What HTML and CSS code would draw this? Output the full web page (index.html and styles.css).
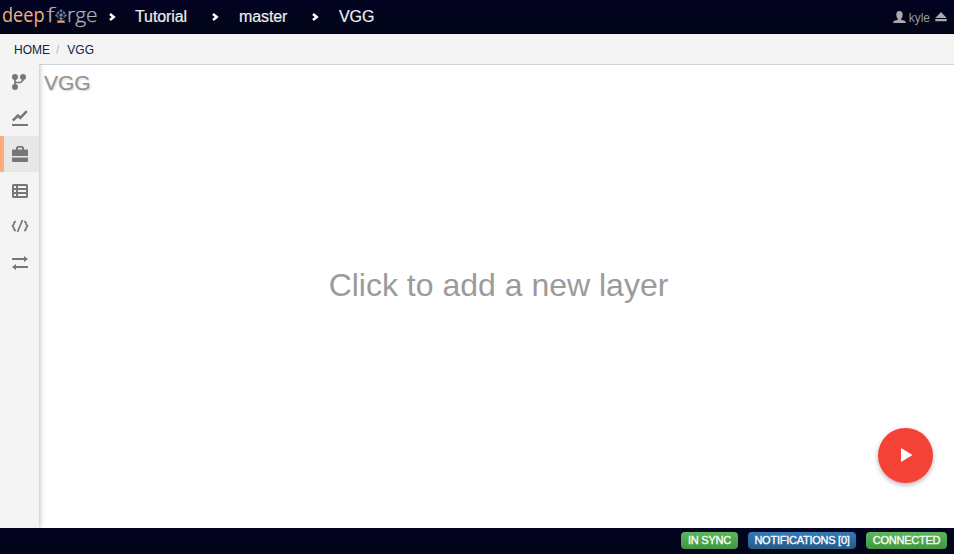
FILE: index.html
```html
<!DOCTYPE html>
<html lang="en">
<head>
<meta charset="utf-8">
<title>DeepForge</title>
<link rel="stylesheet" href="styles.css">
</head>
<body>
<header class="header">
  <svg class="logo" width="101" height="33" viewBox="0 0 101 33">
    <text class="logo-deep" x="2" y="22" textLength="42.500" lengthAdjust="spacingAndGlyphs">deep</text>
    <text class="logo-forge" x="46.500" y="22" textLength="8" lengthAdjust="spacingAndGlyphs">f</text>
    <g stroke="#60788e" stroke-width=".7" fill="none">
      <path d="M61 10l-4 3v4l4 3 4-3v-4zM57 13l8 4M65 13l-8 4M61 10v10"/>
      <g fill="#6f879c" stroke="none"><circle cx="61" cy="10.5" r="1.100"/><circle cx="58" cy="12.500" r="1"/><circle cx="64" cy="12.500" r="1"/><circle cx="56.3" cy="15.500" r="1.1"/><circle cx="65.7" cy="15.500" r="1.1"/><circle cx="61" cy="15" r="1.500"/><circle cx="61" cy="18.500" r="1.2"/></g>
    </g>
    <path d="M56.500 20.500h9l-1.500 1 1.500 1.200h-9l1.500-1.200z" fill="#e9ab78"/>
    <text class="logo-forge" x="67" y="22" textLength="30.500" lengthAdjust="spacingAndGlyphs">rge</text>
  </svg>
  <nav class="path">
    <svg class="chevron" width="8" height="10" viewBox="0 0 8 10"><path d="M1 2L4.700 5 1 8"/></svg>
    <span class="project">Tutorial</span>
    <svg class="chevron" width="8" height="10" viewBox="0 0 8 10"><path d="M1 2L4.700 5 1 8"/></svg>
    <span class="branch">master</span>
    <svg class="chevron" width="8" height="10" viewBox="0 0 8 10"><path d="M1 2L4.700 5 1 8"/></svg>
    <span class="node">VGG</span>
  </nav>
  <div class="user">
    <svg width="13" height="13" viewBox="0 0 13 13"><path d="M6.500 0C4.300 0 3.300 1.300 3.300 3.500c0 1.800.6 3.400 1.500 4.200v1L1.300 9.800Q.2 10.300.2 12h12.600q0-1.700-1.100-2.200L8.200 8.700v-1c.9-.8 1.500-2.400 1.500-4.200C9.700 1.300 8.700 0 6.500 0z"/></svg>
    <span class="user-name">kyle</span>
    <svg width="12" height="10" viewBox="0 0 12 10"><path d="M6 0L.3 6h11.400zM.3 7h11.400v2.300H.3z"/></svg>
  </div>
</header>
<div class="breadcrumb"><span>HOME</span><span class="slash">/</span><span>VGG</span></div>
<main class="main">
  <aside class="sidebar">
    <div class="item"><svg width="18" height="18" viewBox="0 0 18 18"><g fill="#777"><circle cx="4" cy="3.900" r="3"/><circle cx="12" cy="3.900" r="3"/><circle cx="4" cy="14" r="3"/></g><path d="M4 4v10M12 4v3.200L9.700 9.500H4" fill="none" stroke="#777" stroke-width="1.700"/></svg></div>
    <div class="item"><svg width="18" height="18" viewBox="0 0 18 18"><path d="M1.800 11.500L7 6.600l2.300 2.300 6.500-6.700" fill="none" stroke="#777" stroke-width="2.500"/><path d="M1 15h16v2H1z" fill="#777"/></svg></div>
    <div class="item active"><svg width="18" height="18" viewBox="0 0 18 18"><path fill="#777" fill-rule="evenodd" d="M5 4.500V2.500L6.500 1h5L13 2.500v2h3q1 0 1 1V11H1V5.500q0-1 1-1zM7 4.500h4V2.800H7zM1 12.500h16V16q0 1-1 1H2q-1 0-1-1z"/></svg></div>
    <div class="item low"><svg width="18" height="18" viewBox="0 0 18 18"><path fill="#777" fill-rule="evenodd" d="M2.500 2h13Q17 2 17 3.500v11q0 1.500-1.500 1.500h-13Q1 16 1 14.500v-11Q1 2 2.500 2zM3 4v2h2V4zm4 0v2h8V4zM3 8v2h2V8zm4 0v2h8V8zm-4 4v2h2v-2zm4 0v2h8v-2z"/></svg></div>
    <div class="item"><svg width="18" height="18" viewBox="0 0 18 18"><path fill="none" stroke="#777" stroke-width="1.700" d="M5 4.500Q2.800 4.500 3 7L1.500 9 3 11q-.2 2.500 2 2.500M13 4.500q2.200 0 2 2.500l1.500 2-1.500 2q.2 2.500-2 2.500M11.500 3l-5 12"/></svg></div>
    <div class="item low"><svg width="18" height="18" viewBox="0 0 18 18"><path fill="#777" d="M1 4h12V2l4 3-4 3V6H1zM17 12H5v-2l-4 3 4 3v-2h12z"/></svg></div>
  </aside>
  <section class="canvas">
    <div class="title">VGG</div>
    <div class="hint">Click to add a new layer</div>
    <div class="run"><svg width="12" height="14" viewBox="0 0 12 14"><path d="M0 0l11.500 7L0 14z" fill="#fff"/></svg></div>
  </section>
</main>
<footer class="footer">
  <span class="label sync">IN SYNC</span>
  <span class="label notifications">NOTIFICATIONS [0]</span>
  <span class="label connected">CONNECTED</span>
</footer>
</body>
</html>
```
FILE: styles.css
```css
* { box-sizing: border-box; }
body { margin: 0; height: 554px; display: flex; flex-direction: column; overflow: hidden; font-family: "Liberation Sans", Arial, sans-serif; background: #fff; }
.header { height: 34px; flex: none; display: flex; background: linear-gradient(#020222, #020618); border-bottom: 1px solid #000; color: #eee; }
.logo { flex: none; }
.logo text { font-family: "Open Sans", sans-serif; font-size: 20.500px; }
.logo-deep { fill: #efb27f; }
.logo-forge { fill: #b2b2b8; stroke: #b2b2b8; stroke-width: .25px; font-weight: 300; }
.path { display: flex; align-items: center; font-size: 16px; flex: 1; padding-left: 8px; white-space: nowrap; letter-spacing: -.1px; -webkit-text-stroke: .2px #eee; }
.chevron { flex: none; fill: none; stroke: #fff; stroke-width: 2.500; margin-top: 1px; }
.project { width: 77px; margin-left: 18px; }
.branch { width: 73px; margin-left: 19px; }
.node { margin-left: 19px; }
.user { display: flex; align-items: center; padding: 1px 7px 0 0; font-size: 12px; color: #999; fill: #aaa; }
.user-name { margin: 1px 5px 0 3px; }
.breadcrumb { height: 31px; flex: none; display: flex; align-items: center; padding: 1px 0 0 14px; background: #f4f4f4; border-bottom: 1px solid #ced5df; font-size: 12px; color: #0a2447; }
.slash { color: #bbb; margin: 0 8px 0 6px; }
.main { flex: 1; display: flex; min-height: 0; }
.sidebar { width: 39px; flex: none; background: #f4f4f4; box-shadow: 1px 0 5px rgba(0,0,0,.25); clip-path: inset(0 -8px 0 0); margin-top: -1px; z-index: 1; }
.item { height: 36px; display: flex; align-items: center; padding: 0 0 0 11px; border-left: 0 solid #ffab7c; }
.item.low { padding-top: 2px; }
.item svg { display: block; }
.item.active { background: #e7e7e7; border-left-width: 4px; padding: 0 0 0 7px; }
.canvas { flex: 1; position: relative; display: flex; flex-direction: column; align-items: center; }
.title { align-self: flex-start; height: 38px; padding: 5px 0 0 5px; font-size: 21px; line-height: 26px; color: #929292; text-shadow: 1px 1px 2px #ccc; }
.hint { margin-top: 163px; padding-left: 4px; font-size: 32px; line-height: 38px; color: #9b9b9b; white-space: nowrap; }
.run { position: absolute; right: 21px; bottom: 45px; width: 55px; height: 55px; border-radius: 50%; background: #f44336; display: flex; align-items: center; justify-content: center; padding: 0 0 1px 2px; box-shadow: 0 2px 5px rgba(0,0,0,.3); }
.footer { height: 26px; flex: none; display: flex; gap: 10px; justify-content: flex-end; padding: 4px 7px 0 0; background: linear-gradient(#020222, #020618); }
.label { height: 17px; border-radius: 4px; color: #fff; font-size: 11px; line-height: 16px; text-align: center; white-space: nowrap; letter-spacing: -.25px; -webkit-text-stroke: .3px #fff; }
.sync, .connected { background: linear-gradient(#5cb85c, #419641); }
.notifications { background: linear-gradient(#337ab7, #265a88); width: 108px; }
.sync { width: 57px; }
.connected { width: 81px; }
```
